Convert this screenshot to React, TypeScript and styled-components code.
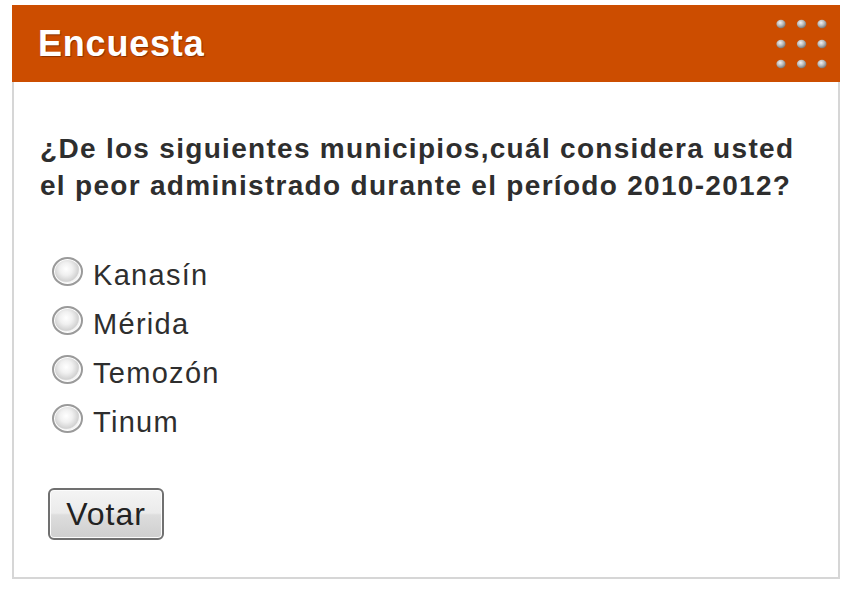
import React, { useState } from 'react';
import styled, { createGlobalStyle } from 'styled-components';

const GlobalStyle = createGlobalStyle`
  html, body {
    margin: 0;
    padding: 0;
    background: #ffffff;
  }
  body {
    font-family: "Liberation Sans", Arial, sans-serif;
  }
`;

const OPTIONS = ['Kanasín', 'Mérida', 'Temozón', 'Tinum'];

const Page = styled.div`
  padding: 5px 0 0 12px;
`;

const Card = styled.div`
  width: 828px;
  display: flex;
  flex-direction: column;
`;

const Header = styled.div`
  height: 77px;
  background-color: #cc4d00;
  display: flex;
  align-items: center;
  justify-content: space-between;
  padding: 0 12px 0 26px;
  box-sizing: border-box;
`;

const Title = styled.h2`
  margin: 0;
  color: #ffffff;
  font-size: 36px;
  font-weight: bold;
  letter-spacing: 0.8px;
  text-shadow: 1px 1px 1px rgba(90, 30, 0, 0.6);
`;

const Body = styled.form`
  border: 2px solid #d6d6d6;
  border-top: none;
  padding: 48px 14px 37px 26px;
  display: flex;
  flex-direction: column;
  align-items: flex-start;
`;

const Question = styled.p`
  margin: 0;
  color: #2e2e2e;
  font-size: 28px;
  font-weight: bold;
  line-height: 37px;
  letter-spacing: 1.3px;
  white-space: nowrap;
`;

const OptionList = styled.div`
  margin-top: 47px;
  display: flex;
  flex-direction: column;
`;

const OptionRow = styled.label`
  height: 49px;
  display: flex;
  align-items: center;
  gap: 10px;
  padding-left: 12px;
  cursor: pointer;
`;

const Radio = styled.input`
  appearance: none;
  -webkit-appearance: none;
  margin: 0;
  width: 31px;
  height: 29px;
  border-radius: 50%;
  border: 2px solid #9a9a9a;
  box-sizing: border-box;
  background: radial-gradient(
    ellipse at 45% 40%,
    #ffffff 0%,
    #f0f0f0 30%,
    #d2d2d2 58%,
    #f6f6f6 64%,
    #e2e2e2 100%
  );
  box-shadow: inset 0 0 0 1px #ffffff;
  position: relative;
  top: -4px;

  &:checked {
    background: radial-gradient(circle, #2b6fc8 0%, #5aa0ef 35%, #f6f6f6 42%, #e2e2e2 100%);
  }
`;

const OptionText = styled.span`
  color: #2e2e2e;
  font-size: 29px;
  letter-spacing: 1.3px;
  line-height: 49px;
`;

const VoteButton = styled.button`
  margin-top: 41px;
  margin-left: 8px;
  width: 116px;
  height: 52px;
  border: 2px solid #707070;
  border-radius: 6px;
  background: linear-gradient(to bottom, #f4f4f4 0%, #ebebeb 48%, #dddddd 52%, #cfcfcf 100%);
  box-shadow: inset 0 0 0 1px #fcfcfc;
  color: #222222;
  font-family: "Liberation Sans", Arial, sans-serif;
  font-size: 32px;
  letter-spacing: 1px;
  padding: 0;
  cursor: pointer;
`;

const Dots = () => (
  <svg width="52" height="50" viewBox="0 0 52 50" aria-hidden="true">
    <defs>
      <radialGradient id="dotShade" cx="40%" cy="35%" r="65%">
        <stop offset="0%" stopColor="#f2f2f2" />
        <stop offset="55%" stopColor="#b8b8b8" />
        <stop offset="100%" stopColor="#7a7a7a" />
      </radialGradient>
    </defs>
    {[0, 1, 2].map((row) =>
      [0, 1, 2].map((col) => (
        <ellipse
          key={`${row}-${col}`}
          cx={5 + col * 20.5}
          cy={5 + row * 20}
          rx={4.6}
          ry={4.2}
          fill="url(#dotShade)"
        />
      ))
    )}
  </svg>
);

const App = () => {
  const [choice, setChoice] = useState<string | null>(null);

  return (
    <Page>
      <GlobalStyle />
      <Card>
        <Header>
          <Title>Encuesta</Title>
          <Dots />
        </Header>
        <Body onSubmit={(e) => e.preventDefault()}>
          <Question>
            ¿De los siguientes municipios,cuál considera usted
            <br />
            el peor administrado durante el período 2010-2012?
          </Question>
          <OptionList>
            {OPTIONS.map((option) => (
              <OptionRow key={option}>
                <Radio
                  type="radio"
                  name="encuesta"
                  value={option}
                  checked={choice === option}
                  onChange={() => setChoice(option)}
                />
                <OptionText>{option}</OptionText>
              </OptionRow>
            ))}
          </OptionList>
          <VoteButton type="submit">Votar</VoteButton>
        </Body>
      </Card>
    </Page>
  );
};

export default App;
